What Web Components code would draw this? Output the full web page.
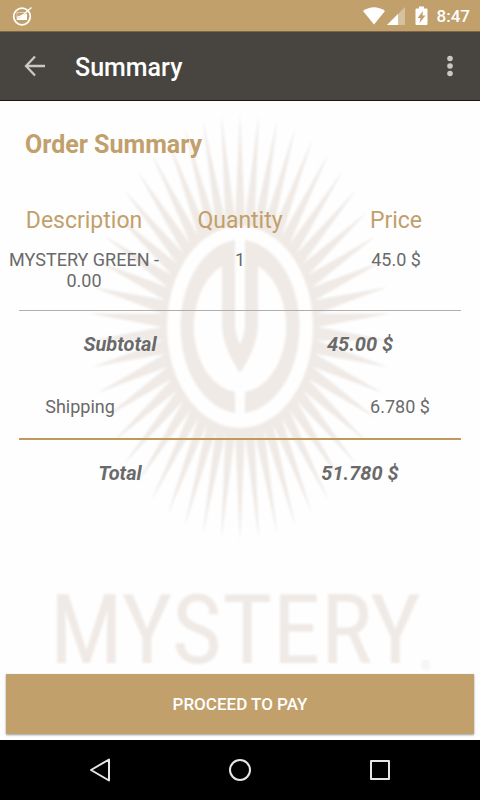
<!DOCTYPE html>
<html lang="en">
<head>
<meta charset="utf-8">
<meta name="viewport" content="width=device-width, initial-scale=1">
<title>Summary</title>
<style>
	:root {
		--primary-color: #c1a06c;
		--bar-color: #484540;
		--text-color: #6a6a6a;
		--watermark-color: #efeae6;
	}

	body {
		margin: 0;
		font-family: Roboto, sans-serif;
		color: var(--text-color);
		background-color: #fefefe;
	}
</style>
</head>
<body>
<summary-page></summary-page>

<script>
function defineElement(name, html, setup) {
	const template = document.createElement('template');
	template.innerHTML = html;

	customElements.define(name, class extends HTMLElement {
		constructor() {
			super();
			this.attachShadow({ mode: 'open' });
			this.shadowRoot.appendChild(template.content.cloneNode(true));
		}

		connectedCallback() {
			if (setup) setup(this, this.shadowRoot);
		}
	});
}

defineElement('status-bar', `
	<style>
		:host {
			display: flex;
			align-items: center;
			box-sizing: border-box;
			height: 32px;
			padding: 0 10px 0 12px;
			background-color: var(--primary-color);
			border-bottom: 1px solid #7c6747;
			color: #ffffff;
			font-size: 17px;
			font-weight: 500;
		}

		.system {
			display: flex;
			align-items: center;
			margin-left: auto;
		}

		.battery {
			margin: 0 9px;
		}

		svg {
			display: block;
		}
	</style>

	<svg width="21" height="20" viewBox="0 0 21 20" fill="none" stroke="#fff" aria-hidden="true">
		<circle cx="10" cy="10.5" r="8.3" stroke-width="1.7"/>
		<path d="M5 14V6.500H13" stroke-width=".8" opacity=".65"/>
		<path d="M5 14V12.500L8 11.500L11 9L15 7.500V14Z" fill="#fff" stroke="none"/>
		<path d="M5 11.500L9 10L12 8L19.500 1.500" stroke-width="1.400"/>
	</svg>
	<div class="system">
		<svg width="43" height="20" viewBox="0 0 43 20" fill="#fff" aria-hidden="true">
			<path d="M0 5Q11-2.500 22 5L11 18.500Z"/>
			<path d="M24 19L42 1V19Z" opacity=".35"/>
			<path d="M24 19L35 8V19Z"/>
		</svg>
		<svg class="battery" width="13" height="20" viewBox="0 0 13 20" aria-hidden="true">
			<path d="M1.500 2.500H4V.5H9V2.500H11.500Q12.500 2.500 12.500 3.500V18Q12.500 19 11.500 19H1.500Q.5 19 .5 18V3.500Q.5 2.500 1.500 2.500Z" fill="#fff"/>
			<path d="M8 5L2.500 12H5.500L4.500 17L10.500 9.500H7.500Z" fill="#c1a06c"/>
		</svg>
		<slot></slot>
	</div>
`);

defineElement('app-bar', `
	<style>
		:host {
			display: flex;
			align-items: center;
			box-sizing: border-box;
			height: 69px;
			padding: 0 15px 0 19px;
			background-color: var(--bar-color);
			border-bottom: 1px solid #1e150c;
			color: #ffffff;
		}

		h1 {
			flex: 1;
			margin: 4px 0 0 24px;
			font-size: 25px;
			font-weight: 500;
			line-height: 32px;
		}

		button {
			padding: 0;
			border: 0;
			background: none;
		}

		svg {
			display: block;
		}
	</style>

	<button type="button" aria-label="Back">
		<svg width="32" height="32" viewBox="0 0 32 32" fill="none" stroke="#c9c8c6" stroke-width="2.300">
			<path d="M26 16H8M16 6.500L7 16L16 25.500"/>
		</svg>
	</button>
	<h1><slot></slot></h1>
	<button type="button" aria-label="More options">
		<svg width="30" height="32" viewBox="0 0 30 32" fill="#c9c8c6">
			<circle cx="15" cy="8.500" r="2.800"/>
			<circle cx="15" cy="16" r="2.800"/>
			<circle cx="15" cy="23.500" r="2.800"/>
		</svg>
	</button>
`);

defineElement('brand-watermark', `
	<style>
		:host {
			display: flex;
			flex-direction: column;
			align-items: center;
			padding-top: 11px;
			overflow: hidden;
			color: var(--watermark-color);
			filter: blur(0.8px);
		}

		svg {
			flex: none;
			width: 300px;
			height: 430px;
			fill: currentColor;
		}

		.name {
			display: flex;
			align-items: flex-end;
			margin-top: 36px;
			font-family: "Liberation Sans Narrow", "Roboto Condensed", Roboto, sans-serif;
			font-size: 97px;
			line-height: 104px;
			white-space: nowrap;
		}

		sup {
			padding-bottom: 8px;
			font-size: 12px;
			line-height: 16px;
		}
	</style>

	<svg viewBox="-150 -215 300 430" aria-hidden="true">
		<path class="rays" fill-rule="evenodd"/>
		<path d="M-5-87A61 87 0 0 0-5 86V65A47 66 0 0 1-18-61V-2Q-17 21 0 46Q17 21 18-2V-61A47 66 0 0 1 5 65V86A61 87 0 0 0 5-87V-2Q4 10 0 17Q-4 10-5-2Z"/>
	</svg>
	<div class="name">MYSTERY<sup>®</sup></div>
`, (host, root) => {
	// 50 pointed rays around an oval hole
	const rays = 50;
	let d = '';
	for (let i = 0; i < rays * 2; i++) {
		const angle = i * Math.PI / rays;
		const rx = i % 2 ? 78 : 150;
		const ry = i % 2 ? 108 : 214;
		d += (i ? 'L' : 'M') + (rx * Math.sin(angle)).toFixed(1) + ' ' + (-ry * Math.cos(angle)).toFixed(1);
	}
	d += 'ZM-73 0A73 101 0 1 0 73 0A73 101 0 1 0-73 0Z';
	root.querySelector('.rays').setAttribute('d', d);
});

defineElement('order-items', `
	<style>
		:host {
			display: block;
			padding: 0 6px;
		}

		table {
			width: 100%;
			table-layout: fixed;
			border-collapse: collapse;
			text-align: center;
		}

		th {
			padding: 0 0 12px;
			color: var(--primary-color);
			font-size: 23px;
			font-weight: 400;
			line-height: 32px;
		}

		td {
			padding: 0;
			font-size: 18px;
			line-height: 21px;
			vertical-align: top;
		}
	</style>

	<table>
		<thead>
			<tr><th>Description</th><th>Quantity</th><th>Price</th></tr>
		</thead>
		<tbody>
			<tr><td>MYSTERY GREEN - 0.00</td><td>1</td><td>45.0 $</td></tr>
		</tbody>
	</table>
`);

defineElement('amount-row', `
	<style>
		:host {
			display: block;
		}

		dl {
			display: grid;
			grid-template-columns: 1fr 1fr;
			margin: 0;
			font-size: 20px;
			font-style: italic;
			font-weight: 700;
			line-height: 24px;
			text-align: center;
		}

		dd {
			margin: 0;
		}

		:host([plain]) dl {
			grid-template-columns: 1fr 1fr 1fr;
			font-size: 18px;
			font-style: normal;
			font-weight: 400;
		}

		:host([plain]) dd {
			grid-column: 3;
		}
	</style>

	<dl>
		<dt><slot name="label"></slot></dt>
		<dd><slot></slot></dd>
	</dl>
`);

defineElement('rule-line', `
	<style>
		:host {
			display: block;
			height: 1px;
			margin: 0 19px;
			background-color: #b0aeae;
		}

		:host([strong]) {
			height: 2px;
			background-color: #c09a5b;
		}
	</style>
`);

defineElement('pay-button', `
	<style>
		:host {
			display: block;
			padding: 6px;
		}

		button {
			display: block;
			width: 100%;
			height: 60px;
			border: 0;
			background-color: var(--primary-color);
			box-shadow: 0 1px 2px rgba(0, 0, 0, 0.4);
			color: #ffffff;
			font: 500 17px/24px Roboto, sans-serif;
			text-transform: uppercase;
		}
	</style>

	<button type="button"><slot></slot></button>
`);

defineElement('nav-bar', `
	<style>
		:host {
			display: flex;
			justify-content: center;
			gap: 108px;
			padding: 14px 0;
			background-color: #000000;
		}

		button {
			padding: 0;
			border: 0;
			background: none;
		}

		svg {
			display: block;
			fill: none;
			stroke: #e6e6e6;
			stroke-width: 2;
			stroke-linejoin: round;
		}
	</style>

	<button type="button" aria-label="Back">
		<svg width="32" height="32" viewBox="0 0 32 32"><path d="M25 5.500V26.500L7 16Z"/></svg>
	</button>
	<button type="button" aria-label="Home">
		<svg width="32" height="32" viewBox="0 0 32 32"><circle cx="16" cy="16" r="10"/></svg>
	</button>
	<button type="button" aria-label="Recent apps">
		<svg width="32" height="32" viewBox="0 0 32 32"><path d="M7 7H25V25H7Z"/></svg>
	</button>
`);

defineElement('summary-page', `
	<style>
		:host {
			display: flex;
			flex-direction: column;
			min-height: 100vh;
		}

		main {
			display: grid;
			flex: 1;
		}

		/* the watermark and the order share one cell */
		brand-watermark, .order {
			grid-area: 1 / 1;
			min-width: 0;
		}

		.order {
			display: flex;
			flex-direction: column;
			z-index: 1;
		}

		h2 {
			margin: 28px 25px 44px;
			color: var(--primary-color);
			font-size: 25px;
			font-weight: 700;
			line-height: 32px;
		}

		order-items {
			margin-bottom: 19px;
		}

		amount-row {
			margin: 21px 0;
		}

		amount-row[plain] {
			margin: 18px 0 19px;
		}

		pay-button {
			margin-top: auto;
		}
	</style>

	<status-bar>8:47</status-bar>
	<app-bar>Summary</app-bar>
	<main>
		<brand-watermark></brand-watermark>
		<div class="order">
			<h2>Order Summary</h2>
			<order-items></order-items>
			<rule-line></rule-line>
			<amount-row><span slot="label">Subtotal</span>45.00 $</amount-row>
			<amount-row plain><span slot="label">Shipping</span>6.780 $</amount-row>
			<rule-line strong></rule-line>
			<amount-row><span slot="label">Total</span>51.780 $</amount-row>
			<pay-button>Proceed to pay</pay-button>
		</div>
	</main>
	<nav-bar></nav-bar>
`);
</script>
</body>
</html>
